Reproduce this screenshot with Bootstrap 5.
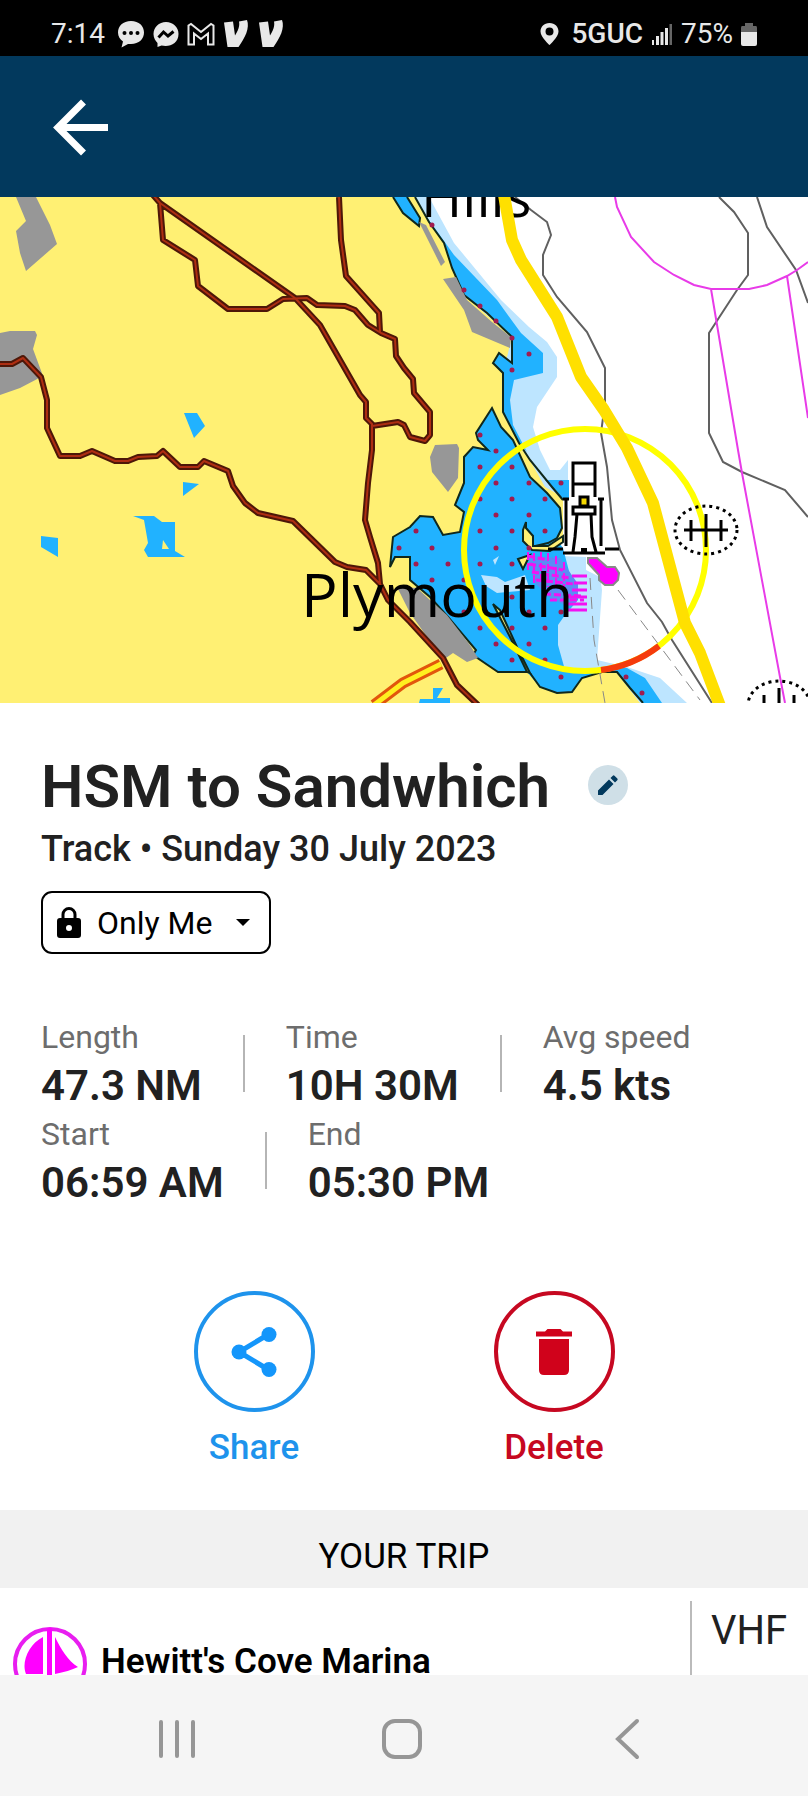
<!DOCTYPE html>
<html lang="en">
<head>
<meta charset="utf-8">
<meta name="viewport" content="width=device-width, initial-scale=1">
<title>HSM to Sandwhich</title>
<link href="https://cdn.jsdelivr.net/npm/bootstrap@5.3.0/dist/css/bootstrap.min.css" rel="stylesheet">
<style>
  body { font-family: Roboto, sans-serif; color: #212121; background: #fff; }
  svg { display: block; flex: none; }
  .shell { height: 100vh; }
  .status { height: 56px; background: #000; color: #e8e8e8; font-size: 28px; line-height: 32px; padding: 11px 51px 0; }
  .network { font-weight: 500; }
  .appbar { height: 141px; background: #02395d; padding: 0 40px; }
  .chart { width: 100%; height: auto; }
  .chart text { font-family: "Open Sans", "Noto Sans", sans-serif; }
  .details { padding: 48px 41px 0; }
  .title { font-size: 60px; line-height: 72px; font-weight: 600; gap: 38px; }
  .edit { width: 40px; height: 40px; background: #cfdfe7; }
  .subtitle { font-size: 36px; line-height: 40px; font-weight: 500; margin: 6px 0 22px; }
  .privacy { height: 63px; border: 2px solid #000; border-radius: 11px; padding: 0 18px 0 13px; gap: 15px; font-size: 32px; color: #000; background: #fff; }
  .stats { padding-top: 63px; }
  .stats dl { height: 97px; }
  .stats dt { font-size: 32px; line-height: 40px; font-weight: 400; color: #6d6d6d; }
  .stats dd { font-size: 42px; line-height: 50px; font-weight: 600; margin: 4px 0 0; }
  .rule { width: 2px; height: 57px; background: #b5b5b5; margin: 18px 41px 0; }
  .actions { padding: 80px 0 41px; }
  .action { width: 300px; font-size: 35px; line-height: 42px; font-weight: 500; gap: 15px; }
  .ring { width: 121px; height: 121px; border: 4px solid currentColor; }
  .share { color: #1e93ec; }
  .delete { color: #c60821; }
  .section { background: #f1f1f1; color: #000; font-size: 35px; line-height: 70px; padding-top: 12px; height: 78px; }
  .stop-name { color: #000; font-size: 35px; line-height: 40px; font-weight: 600; padding: 38px 0 0 12px; gap: 13px; }
  .vhf { width: 118px; margin-top: 13px; border-left: 2px solid #bbb; padding-right: 2px; font-size: 40px; line-height: 60px; }
  .sysnav { height: 121px; background: #f5f5f5; padding: 6px 4px 0 0; }
  .sysnav button { width: 28%; }
</style>
</head>
<body>
<div class="shell d-flex flex-column overflow-hidden">
  <header class="flex-shrink-0">
    <div class="status d-flex align-items-center">
      <span>7:14</span>
      <svg class="ms-2 me-1" width="36" height="30" viewBox="0 0 36 30"><path fill="#e8e8e8" d="M18 2C10 2 5 7 5 13.500c0 4 2 7 5 9l-1.500 6 6.500-3.500h3c8 0 13-5 13-11.500S26 2 18 2z"/><g fill="#000"><circle cx="11.500" cy="14" r="2"/><circle cx="18" cy="14" r="2"/><circle cx="24.500" cy="14" r="2"/></g></svg>
      <svg class="me-2" width="26" height="30" viewBox="0 0 26 30"><path fill="#e8e8e8" d="M13 3C6 3 .5 8 .5 15c0 4 2 7 4 9v4l4-1.500c8 2 17-2 17-11.500C25.500 8 20 3 13 3z"/><path d="M5.500 18.500l5-5.500 4.500 4 5.500-4.500" fill="none" stroke="#000" stroke-width="3"/></svg>
      <svg class="me-2" width="28" height="30" viewBox="0 0 28 30"><path fill="none" stroke="#e8e8e8" stroke-width="2" d="M1.500 25.500V6.500L4 5l10 8 10-8 2.500 1.500v19h-5.500v-11l-7 5.500-7-5.500v11z"/></svg>
      <svg class="me-2" width="27" height="30" viewBox="0 0 27 30"><path fill="#e8e8e8" d="M1 3.500l9-1 2 14c3-5 5-9 4-14l8-1.500c3 8-2 18-8.500 27H4.500z"/></svg>
      <svg width="27" height="30" viewBox="0 0 27 30"><path fill="#e8e8e8" d="M1 3.500l9-1 2 14c3-5 5-9 4-14l8-1.500c3 8-2 18-8.500 27H4.500z"/></svg>
      <svg class="ms-auto" width="19" height="24" viewBox="0 0 19 24"><path fill="#e8e8e8" fill-rule="evenodd" d="M9.500 1C4 1 .5 5 .5 9.500.5 15 9.500 23 9.500 23s9-8 9-13.500C18.500 5 15 1 9.500 1zm0 4.500a4 4 0 1 1 0 8 4 4 0 0 1 0-8z"/></svg>
      <span class="network ms-2 ps-1">5GUC</span>
      <svg class="ms-2 me-2" width="22" height="24" viewBox="0 0 22 24"><path fill="#e8e8e8" d="M1 18h2v5H1zM5 14h3v9H5zM9.500 10h3v13h-3zM14 6h3v17h-3z"/><path fill="#666" d="M18.500 2h2.500v21h-2.500z"/></svg>
      <span>75%</span>
      <svg class="ms-2" width="16" height="26" viewBox="0 0 16 26"><path fill="#666" d="M4 2h8v3h3q1 0 1 2v4H0V7q0-2 1-2h3z"/><path fill="#e8e8e8" d="M0 11h16v12q0 2-2 2H2q-2 0-2-2z"/></svg>
    </div>
    <nav class="appbar d-flex align-items-center">
      <button type="button" class="btn p-0 border-0" aria-label="Back">
        <svg width="82" height="60" viewBox="0 0 82 60"><path d="M43.500 5L18 30.500 43.500 56M18 30.500h50" fill="none" stroke="#fff" stroke-width="7"/></svg>
      </button>
    </nav>
  </header>

  <main class="flex-fill overflow-hidden">
    <svg class="chart" viewBox="0 197 808 506" role="img" aria-label="Nautical chart of Plymouth">
      <path fill="#fff073" d="M0 197h808v506H0z"/>
      <!-- open water and shallows -->
      <path fill="#fff" d="M415 197L429 222 444 243 452 268 464 295 487 313 512 337V363L499 353 493 363 503 373V412L519 443 530 460 552 487 563 500V535L540 600 560 672 602 672H617L630 688 643 703H808V197z"/>
      <path fill="#bde5ff" d="M415 197h14L454 243 501 300 529 327 547 342 557 357V377L537 407 533 427 540 450 550 470 560 470 568 460V500L545 487 503 412V373L512 337 464 295 444 243zM562 556L586 557 586 570 600 577 602 590 597 660 627 667 660 678 687 703H640L617 673 560 672 550 620z"/>
      <path fill="#21b2ff" d="M415 197L424 213 454 255 497 300 521 333 543 353V373L514 380 510 400 513 425 527 452 519 443 503 412V373L493 363 499 353 512 363V337L487 313 464 295 452 268 444 243 429 222zM545 480h24v21l-6-1zM602 673L605 668 627 668 645 678 662 703H643L630 688 617 673z"/>
      <path fill="#21b2ff" stroke="#10281c" stroke-width="2" d="M393 197L403 213 419 226 420 218 407 197"/>
      <!-- harbour -->
      <path fill="#21b2ff" d="M492 408L476 433 478 440 488 450 473 447 464 457V483L455 505 464 512 460 532 443 535 433 517 420 516 410 527 393 537 390 567 395 557H410V580L430 597 448 617 476 650 473 655 498 672H527L540 687 557 693 572 692 582 678 602 672 565 670 558 645V625L565 615 578 600V590L570 575 563 548 557 540 562 528 560 508 547 493 530 477 513 440 501 427z"/>
      <path fill="none" stroke="#10281c" stroke-width="2" d="M415 197L429 222 444 243 452 268 464 295 487 313 512 337V363L499 353 493 363 503 373V412L519 443 530 460 552 487 563 500M531 547L548 543 557 538 562 528 560 508 547 493 530 477 513 440 501 427 492 408 476 433 478 440 488 450 473 447 464 457V483L455 505 464 512 460 532 443 535 433 517 420 516 410 527 393 537 390 567 395 557H410V580L430 597 448 617 476 650 473 655 498 672H527M530 673L540 687 557 693 572 692 582 678 602 672H617L630 688 643 703"/>
      <path fill="#bde5ff" d="M481 575L497 577 505 582 525 575 530 590 497 593 486 586zM493 560l6-4-4 9z"/>
      <path fill="#fff073" stroke="#10281c" stroke-width="2" d="M493 604L510 637 527 672 530 673 517 647 500 610zM526 522V528L533 536V546L548 546 563 536 563 542 550 551 532 550 523 541 523 530zM518 559L530 555 523 569z"/>
      <!-- built-up areas -->
      <path fill="#979797" d="M16 197H36L50 225 57 244 26 271 20 253 16 231 26 221zM0 333L10 331H35L37 335 33 349 43 376 20 388 0 395zM430 457L435 445 457 444 459 448 458 478 448 492 432 472zM397 587L417 588 430 600 447 615 470 645 478 658 467 662 453 653 443 660 420 627 410 613zM419 222L426 225 445 262 441 266zM443 279L456 277 467 300 492 322 511 337 510 348 472 332 464 310z"/>
      <!-- ponds -->
      <path fill="#21b2ff" d="M184 413H197L205 426 194 438zM183 482L199 484 183 496zM41 536L58 538V557L41 547zM133 516H154L162 522H175V551L185 557H148L144 550 148 543 144 520zM419 703L420 699H433V688H443L437 698H450V703z"/>
      <path fill="#fff073" d="M163 540l6 9h-7z"/>
      <!-- rocks -->
      <path stroke="#a01c50" stroke-width="5" stroke-linecap="round" d="M432 225h0M464 290h0M480 306h0M496 321h0M512 338h0M529 354h0M512 370h0M480 435h0M496 451h0M480 467h0M512 467h0M496 483h0M529 483h0M561 483h0M480 499h0M512 499h0M545 499h0M496 515h0M529 515h0M416 531h0M480 531h0M512 531h0M545 531h0M399 548h0M432 548h0M496 548h0M529 548h0M416 564h0M448 564h0M480 564h0M512 564h0M432 580h0M464 580h0M561 580h0M512 597h0M464 612h0M529 612h0M561 612h0M480 628h0M512 628h0M545 628h0M496 644h0M529 644h0M512 660h0M545 660h0M561 677h0M626 677h0M642 693h0"/>
      <!-- roads -->
      <g fill="none" stroke-linejoin="round">
        <path stroke="#e2560c" stroke-width="11" d="M374 705L403 683 441 664"/><path stroke="#fff020" stroke-width="5" d="M374 705L403 683 441 664"/>
        <path stroke="#4d1708" stroke-width="6" d="M153 195L160 203 163 240 195 260 198 286 228 309H267L283 299 307 298 317 305 345 306 355 310 368 325 381 333 395 339 396 356 404 368 413 379 414 393 430 412V435L425 441 410 437 404 425 398 422 372 426M160 203L295 298 320 325 360 395 366 402V418L372 424V450L368 483 365 520 370 537 378 563 380 584M339 197L341 240 346 276 379 313 380 332M0 364H12L23 358 41 377 47 400V428L60 456H80L92 451 115 461H128L138 457 157 456 163 451 180 467H198L204 461 228 471 233 486 245 503 258 513 293 521 335 562 347 567 366 570 380 584 388 600 410 622 443 658 457 685 478 705"/>
        <path stroke="#ae2e12" stroke-width="2" d="M153 195L160 203 163 240 195 260 198 286 228 309H267L283 299 307 298 317 305 345 306 355 310 368 325 381 333 395 339 396 356 404 368 413 379 414 393 430 412V435L425 441 410 437 404 425 398 422 372 426M160 203L295 298 320 325 360 395 366 402V418L372 424V450L368 483 365 520 370 537 378 563 380 584M339 197L341 240 346 276 379 313 380 332M0 364H12L23 358 41 377 47 400V428L60 456H80L92 451 115 461H128L138 457 157 456 163 451 180 467H198L204 461 228 471 233 486 245 503 258 513 293 521 335 562 347 567 366 570 380 584 388 600 410 622 443 658 457 685 478 705"/>
      </g>
      <!-- depth contours, caution area -->
      <path fill="none" stroke="#606060" stroke-width="2" d="M515 197L531 210 547 222 551 235 543 255V275L557 297 587 332 605 368V403L601 433 607 467 612 520 620 550 647 603 662 622 672 640 712 703M719 197L734 212 748 233V275L737 290 709 333V433L723 462 742 472 785 490 808 517M757 197L767 227 796 270 808 303"/>
      <path fill="none" stroke="#888" stroke-width="1" stroke-dasharray="12 7" d="M590 578L594 640 605 703M618 590L700 700"/>
      <path fill="none" stroke="#e83be8" stroke-width="2" d="M615 197L617 207 631 237 654 262 674 275 694 285 711 289H749L767 285 787 276 797 270 808 262M711 289L738 450 742 473 780 677 785 703M787 276L808 418"/>
      <!-- anchorage hatch -->
      <path fill="#5b8cf5" d="M528 556L560 558 578 584 578 596 566 606 548 596 534 582z"/>
      <path fill="none" stroke="#f212f2" stroke-width="3" stroke-dasharray="7 3" d="M528 556l20 4M529 564l34 6M532 572l38 6M536 580l38 4M544 594l38 2M550 600l34 0"/>
      <path fill="none" stroke="#f212f2" stroke-width="3" d="M572 576h15M574 583h13M572 590h15M568 597h19M568 604h19M568 610h19"/>
      <path fill="none" stroke="#f212f2" stroke-width="2" stroke-dasharray="8 3" d="M528 552v18M534 553v30M541 552v30M548 553v34M556 556v32M564 562v26"/>
      <!-- light sectors -->
      <circle cx="585" cy="550" r="121" fill="none" stroke="#ff0" stroke-width="6"/>
      <path fill="none" stroke="#f53b0d" stroke-width="6" d="M601 670A121 121 0 0 0 659 646"/>
      <text x="421" y="217" font-size="56">Hills</text>
      <path fill="none" stroke="#ffe000" stroke-width="12" stroke-linejoin="round" d="M504 195L512 240 521 260 557 317 581 377 604 410 627 448 653 503 685 623 700 653 720 706"/>
      <text x="301" y="617" font-size="61">Plymouth</text>
      <!-- lighthouse -->
      <path fill="#fff" d="M572 461h25v38h5v50H564v-50h8z"/>
      <path fill="none" stroke="#000" stroke-width="3" d="M573 497V463H595V497M573 484H595M566 500V546M601 500V546M573 507H595V514H573zM577 514L575 537 573 552M591 514L592 537 596 552M563 553H605M548 549H563M605 549H619M563 499h6M598 499h6"/>
      <path fill="#f5d800" stroke="#000" stroke-width="3" d="M580 497h8v9h-8z"/><path d="M581 548h6v5h-6z"/>
      <path fill="#f0f" stroke="#888" stroke-width="2" d="M588 558h9l10 9h8l4 6-1 7-5 5h-8l-6-5v-5l-11-12z"/>
      <!-- wrecks -->
      <g fill="none" stroke="#000" stroke-width="3">
        <ellipse cx="706" cy="530" rx="31" ry="24" stroke-dasharray="3 4"/><path d="M684 530H728M691 520V541M706 514V547M721 520V541"/>
        <ellipse cx="779" cy="705" rx="31" ry="24" stroke-dasharray="3 4"/><path d="M764 695V706M779 688V706M794 695V706"/>
      </g>
    </svg>

    <section class="details">
      <h1 class="title d-flex align-items-center m-0">HSM to Sandwhich
        <button type="button" class="edit btn rounded-circle border-0 p-0 mb-1 d-flex align-items-center justify-content-center" aria-label="Edit name">
          <svg width="24" height="24" viewBox="0 0 24 24"><path fill="#02395d" d="M2 17.500V22h4.500L17.500 11 13 6.500zM21.300 7.200a1.200 1.200 0 0 0 0-1.700l-2.800-2.800a1.200 1.200 0 0 0-1.700 0L14.500 5 19 9.500z"/></svg>
        </button>
      </h1>
      <p class="subtitle">Track • Sunday 30 July 2023</p>
      <button type="button" class="privacy d-flex align-items-center">
        <svg width="26" height="34" viewBox="0 0 26 34"><path fill="none" stroke="#000" stroke-width="3" d="M7 13V8.500a6 6 0 0 1 12 0V13"/><path fill-rule="evenodd" d="M4 12h18q3 0 3 3v14q0 3-3 3H4q-3 0-3-3V15q0-3 3-3zm9 7a3 3 0 1 0 0 6 3 3 0 0 0 0-6z"/></svg>
        <span>Only Me</span>
        <svg class="ms-2" width="16" height="8" viewBox="0 0 16 8"><path d="M1 0h14L8 7z"/></svg>
      </button>

      <div class="stats">
        <dl class="d-flex m-0">
          <div><dt>Length</dt><dd>47.3 NM</dd></div>
          <div class="rule"></div>
          <div><dt>Time</dt><dd>10H 30M</dd></div>
          <div class="rule"></div>
          <div><dt>Avg speed</dt><dd>4.5 kts</dd></div>
        </dl>
        <dl class="d-flex m-0">
          <div><dt>Start</dt><dd>06:59 AM</dd></div>
          <div class="rule"></div>
          <div><dt>End</dt><dd>05:30 PM</dd></div>
        </dl>
      </div>
    </section>

    <div class="actions d-flex justify-content-center">
      <button type="button" class="action share bg-transparent border-0 p-0 d-flex flex-column align-items-center">
        <span class="ring rounded-circle d-flex align-items-center justify-content-center">
          <svg width="46" height="52" viewBox="0 0 46 52"><path fill="none" stroke="#1496fb" stroke-width="5" d="M38 8L8 26 38 44"/><g fill="#1496fb"><circle cx="38" cy="8.500" r="7.500"/><circle cx="8" cy="26" r="7.500"/><circle cx="38" cy="43.500" r="7.500"/></g></svg>
        </span>Share
      </button>
      <button type="button" class="action delete bg-transparent border-0 p-0 d-flex flex-column align-items-center">
        <span class="ring rounded-circle d-flex align-items-center justify-content-center">
          <svg width="36" height="46" viewBox="0 0 36 46"><path fill="#d0021b" d="M3 10h30v31q0 5-5 5H8q-5 0-5-5zM0 2.500h9L11.500 0h13L27 2.500h9V7.500H0z"/></svg>
        </span>Delete
      </button>
    </div>

    <h2 class="section text-center fw-normal m-0">YOUR TRIP</h2>
    <div class="d-flex">
      <div class="stop-name flex-fill d-flex">
        <svg width="76" height="76" viewBox="0 0 76 76"><circle cx="38" cy="38" r="35" fill="none" stroke="#e81ef0" stroke-width="4"/><path fill="#f0f" d="M35 2h5v48h-5zM31 11v37H14c-5-12 3-30 17-37zM43 11c6 12 13 24 23 30-6 3-14 5-23 7z"/></svg>
        <span class="pt-3">Hewitt's Cove Marina</span>
      </div>
      <div class="vhf text-center">VHF</div>
    </div>
  </main>

  <nav class="sysnav flex-shrink-0 d-flex justify-content-center align-items-center">
    <button type="button" class="bg-transparent border-0 p-0 d-flex justify-content-center" aria-label="Recent apps"><svg width="40" height="42" viewBox="0 0 40 42"><path stroke="#969696" stroke-width="4" stroke-linecap="round" d="M4 4v34M20 4v34M36 4v34"/></svg></button>
    <button type="button" class="bg-transparent border-0 p-0 d-flex justify-content-center" aria-label="Home"><svg width="42" height="42" viewBox="0 0 42 42"><rect x="3" y="3" width="36" height="36" rx="11" fill="none" stroke="#969696" stroke-width="4"/></svg></button>
    <button type="button" class="bg-transparent border-0 p-0 d-flex justify-content-center" aria-label="Back"><svg width="26" height="42" viewBox="0 0 26 42"><path fill="none" stroke="#969696" stroke-width="4" stroke-linecap="round" d="M23 3L4 21 23 39"/></svg></button>
  </nav>
</div>
<script src="https://cdn.jsdelivr.net/npm/bootstrap@5.3.0/dist/js/bootstrap.bundle.min.js"></script>
</body>
</html>
